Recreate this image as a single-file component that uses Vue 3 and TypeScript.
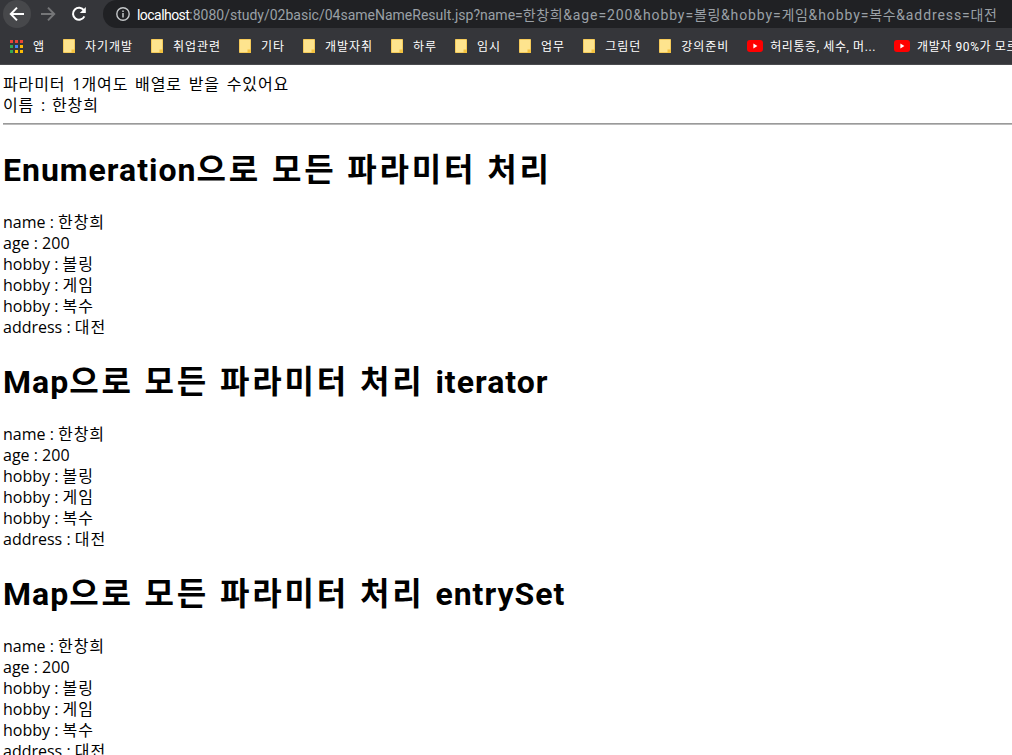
<script setup lang="ts">
interface Param { k: string; v: string }
interface Run { t: string; ko: boolean }
const params: Param[] = [
  { k: 'name', v: '한창희' },
  { k: 'age', v: '200' },
  { k: 'hobby', v: '볼링' },
  { k: 'hobby', v: '게임' },
  { k: 'hobby', v: '복수' },
  { k: 'address', v: '대전' },
]
const sections = ['Enumeration으로 모든 파라미터 처리', 'Map으로 모든 파라미터 처리 iterator', 'Map으로 모든 파라미터 처리 entrySet']
const bookmarks = ['자기개발', '취업관련', '기타', '개발자취', '하루', '임시', '업무', '그림던', '강의준비']
const dots = ['#ea4335', '#ea4335', '#ea4335', '#34a853', '#4285f4', '#fbbc05', '#34a853', '#fbbc05', '#fbbc05']
const urlRest = ':8080/study/02basic/04sameNameResult.jsp?name=한창희&age=200&hobby=볼링&hobby=게임&hobby=복수&address=대전'

function runs(s: string): Run[] {
  return s.split(/([\uAC00-\uD7A3]+)/).filter(Boolean).map((t) => ({ t, ko: /[\uAC00-\uD7A3]/.test(t) }))
}
</script>

<template>
  <div class="window">
    <header class="chrome">
      <div class="toolbar">
        <div class="nav">
          <span class="nav-btn active">
            <svg width="16" height="16" viewBox="0 0 16 16"><path d="M15 8H2M8 1.6 1.8 8 8 14.4" fill="none" stroke="#fff" stroke-width="2"/></svg>
          </span>
          <span class="nav-btn">
            <svg width="16" height="16" viewBox="0 0 16 16"><path d="M1 8h13M8 1.6 14.2 8 8 14.4" fill="none" stroke="#757678" stroke-width="2"/></svg>
          </span>
          <span class="nav-btn">
            <svg width="16" height="16" viewBox="0 0 16 16"><path d="M13.4 10.4A6 6 0 1 1 13 4.4" fill="none" stroke="#fff" stroke-width="2"/><path d="M14.8 1v6h-6z" fill="#fff"/></svg>
          </span>
        </div>
        <div class="omnibox">
          <svg class="info" width="16" height="16" viewBox="0 0 16 16"><circle cx="8" cy="8" r="6.2" fill="none" stroke="#c4c7c9" stroke-width="1.4"/><path d="M8 7v4.6M8 4.4v1.6" stroke="#c4c7c9" stroke-width="1.5"/></svg>
          <span class="url"><span class="host">localhost</span><span v-for="(r, i) in runs(urlRest)" :key="i" :class="{ ko: r.ko, tail: i > 1 && !r.ko }">{{ r.t }}</span></span>
        </div>
      </div>
      <nav class="bookmarks">
        <span class="mark apps">
          <span class="grid"><i v-for="(c, i) in dots" :key="i" :style="{ background: c }"></i></span>
          <span class="label">앱</span>
        </span>
        <span v-for="b in bookmarks" :key="b" class="mark">
          <svg width="12" height="14" viewBox="0 0 12 14"><path d="M.5.5h11v13H.5z" fill="#fee48e" stroke="#f5cb5a"/><path d="M8.5 14v-3.5H12V14z" fill="#f3c23f"/></svg>
          <span class="label">{{ b }}</span>
        </span>
        <span class="mark yt">
          <svg width="16" height="12" viewBox="0 0 16 12"><rect width="16" height="12" rx="3" fill="#f00"/><path d="M6.4 3.6v4.8L10.4 6z" fill="#fff"/></svg>
          <span class="label">허리통증, 세수, 머...</span>
        </span>
        <span class="mark yt">
          <svg width="16" height="12" viewBox="0 0 16 12"><rect width="16" height="12" rx="3" fill="#f00"/><path d="M6.4 3.6v4.8L10.4 6z" fill="#fff"/></svg>
          <span class="label">개발자 90%가 모르는</span>
        </span>
      </nav>
    </header>
    <main class="page">
      <div class="spaced"><span v-for="(r, i) in runs('파라미터 1개여도 배열로 받을 수있어요')" :key="i" :class="{ ko: r.ko }">{{ r.t }}</span></div>
      <div class="spaced"><span v-for="(r, i) in runs('이름 : 한창희')" :key="i" :class="{ ko: r.ko }">{{ r.t }}</span></div>
      <hr />
      <section v-for="s in sections" :key="s">
        <h1><span v-for="(r, i) in runs(s)" :key="i" :class="{ ko: r.ko }">{{ r.t }}</span></h1>
        <div v-for="(p, i) in params" :key="i"><span v-for="(r, j) in runs(p.k + ' : ' + p.v)" :key="j" :class="{ ko: r.ko }">{{ r.t }}</span></div>
      </section>
    </main>
  </div>
</template>

<style>
html, body { margin: 0; overflow: hidden; background: #fff; }
</style>

<style scoped>
.window {
  width: 1012px;
  height: 755px;
  overflow: hidden;
  font-family: "Open Sans", "Noto Sans CJK KR", sans-serif;
}
.ko { letter-spacing: 0.9px; }
.spaced { word-spacing: 2.6px; }
.chrome {
  height: 65px;
  box-sizing: border-box;
  background: #35363a;
  border-bottom: 1px solid #4a4b4e;
  overflow: hidden;
  font-family: Roboto, "Noto Sans CJK KR", sans-serif;
}
.toolbar {
  display: flex;
  align-items: center;
  height: 28px;
  padding-left: 3px;
}
.nav { display: flex; gap: 3px; flex: none; }
.nav-btn {
  width: 28px;
  height: 28px;
  border-radius: 50%;
  display: flex;
  align-items: center;
  justify-content: center;
}
.nav-btn.active { background: #47484b; }
.omnibox {
  flex: 1;
  height: 28px;
  margin-left: 10px;
  background: #202124;
  border-radius: 14px 0 0 14px;
  display: flex;
  align-items: center;
  min-width: 0;
}
.info { margin-left: 12px; flex: none; }
.url {
  margin-left: 6px;
  color: #9aa0a6;
  font-size: 14px;
  white-space: nowrap;
}
.url .ko { letter-spacing: 0.6px; }
.tail { letter-spacing: 0.9px; }
.host { color: #fff; letter-spacing: -0.55px; }
.bookmarks {
  display: flex;
  align-items: center;
  height: 36px;
  padding-left: 10px;
  color: #fff;
  font-size: 12px;
  gap: 18px;
  white-space: nowrap;
}
.mark { display: flex; align-items: center; gap: 10px; flex: none; }
.yt { gap: 7px; }
.label { letter-spacing: 0.96px; position: relative; top: -1px; }
.yt .label { letter-spacing: 0.6px; }
.grid {
  display: grid;
  grid-template-columns: repeat(3, 3px);
  grid-auto-rows: 3px;
  gap: 2px;
}
.grid i { display: block; }
.page {
  padding: 9px 0 0 3px;
  color: #000;
  font-size: 16px;
  line-height: 21px;
}
hr {
  margin: 7px 0 22.44px;
  height: 2px;
  box-sizing: border-box;
  border: 0;
  border-top: 1px solid #9a9a9a;
  border-bottom: 1px solid #bbb;
}
h1 {
  font-family: Roboto, "Noto Sans CJK KR", sans-serif;
  font-size: 32px;
  line-height: 43px;
  font-weight: 700;
  letter-spacing: 1px;
  word-spacing: 2px;
  margin: 21.44px 0 19.44px;
  padding-top: 2px;
}
h1 .ko { letter-spacing: 2.8px; }
</style>
